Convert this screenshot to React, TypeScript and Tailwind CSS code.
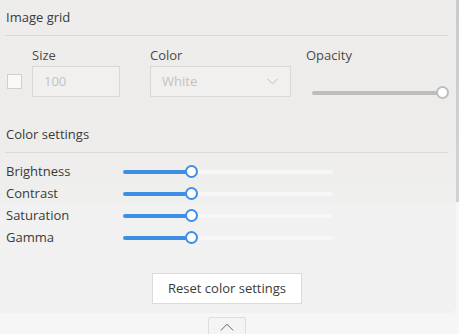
import React from "react";

const font = { fontFamily: '"Open Sans", "Noto Sans", sans-serif' };

function ColorSlider({ label }: { label: string }) {
  return (
    <div className="flex h-[22px] items-center">
      <div className="w-[123px] pl-[6px] text-[13px] leading-[18px] text-[#3a3a3a]">{label}</div>
      <div className="relative h-[13px] w-[210px]">
        <div className="absolute left-0 top-[5px] h-[4px] w-[210px] rounded-full bg-[#f7f7f7]" />
        <div className="absolute left-0 top-[5px] h-[4px] w-[64px] rounded-full bg-[#3d8fe6]" />
        <div className="absolute left-[62px] top-0 h-[13px] w-[13px] rounded-full border-2 border-[#3d8fe6] bg-white" />
      </div>
    </div>
  );
}

export default function App() {
  return (
    <div
      style={font}
      className="flex h-[334px] w-[459px] flex-col overflow-hidden bg-[linear-gradient(to_bottom,#cbcbcb_0px,#d2d2d2_202px,#f6f6f6_202px)]"
    >
      <div className="flex h-[313px] w-[456px] shrink-0 flex-col rounded-br-[6px] bg-[linear-gradient(to_bottom,#efedeb_0px,#eeecea_120px,#efefee_201px,#f1f1f1_202px)]">
        <div className="h-[35px] pl-[6px] pt-[8px] text-[13px] leading-[18px] text-[#3a3a3a]">Image grid</div>
        <div className="ml-[5px] h-px w-[443px] bg-[#d9d9d9]" />
        <div className="mt-[10px] flex h-[51px]">
          <div className="ml-[7px] flex w-[15px] flex-col">
            <div className="h-[20px]" />
            <div className="flex h-[31px] items-center">
              <div className="h-[15px] w-[15px] border border-[#cfcfcf] bg-[#fbf9f8]" />
            </div>
          </div>
          <div className="ml-[10px] flex w-[88px] flex-col">
            <div className="h-[20px] text-[13px] leading-[18px] text-[#4a4a4a]">Size</div>
            <div className="flex h-[31px] items-center border border-[#d8d8d8] bg-[#f1f0ef] pl-[11px] text-[13px] text-[#c2c2c2]">
              100
            </div>
          </div>
          <div className="ml-[30px] flex w-[141px] flex-col">
            <div className="h-[20px] text-[13px] leading-[18px] text-[#4a4a4a]">Color</div>
            <div className="flex h-[31px] items-center justify-between border border-[#d8d8d8] bg-[#f1f0ef] pl-[11px] pr-[12px] text-[13px] text-[#c2c2c2]">
              <span>White</span>
              <svg width="11" height="7" viewBox="0 0 11 7" fill="none">
                <path d="M0.5 0.8 L5.5 5.8 L10.5 0.8" stroke="#bdbdbd" strokeWidth="1" />
              </svg>
            </div>
          </div>
          <div className="ml-[15px] flex h-[51px] w-[142px] flex-col">
            <div className="h-[20px] text-[13px] leading-[18px] text-[#4a4a4a]">Opacity</div>
            <div className="relative ml-[6px] mt-[22px] h-[13px] w-[137px] shrink-0">
              <div className="absolute left-0 top-[4.5px] h-[4px] w-[130px] rounded-full bg-[#bdbdbd]" />
              <div className="absolute left-[124px] top-0 h-[13px] w-[13px] rounded-full border-2 border-[#bdbdbd] bg-white" />
            </div>
          </div>
        </div>
        <div className="mt-[28px] pl-[6px] text-[13px] leading-[18px] text-[#3a3a3a]">Color settings</div>
        <div className="ml-[5px] mt-[9px] h-px w-[443px] bg-[#d9d9d9]" />
        <div className="mt-[7px] flex flex-col">
          <ColorSlider label="Brightness" />
          <ColorSlider label="Contrast" />
          <ColorSlider label="Saturation" />
          <ColorSlider label="Gamma" />
        </div>
        <div className="mt-[25px] flex pl-[152px]">
          <div className="flex h-[31px] w-[150px] items-center justify-center border border-[#dadada] bg-white text-[13px] text-[#3a3a3a]">
            Reset color settings
          </div>
        </div>
      </div>
      <div className="mt-[4px] flex justify-center pr-[5px]">
        <div className="flex h-[20px] w-[38px] items-start justify-center rounded-t-[3px] border border-b-0 border-[#dedede] bg-[#f4f4f4] pt-[5px]">
          <svg width="14" height="8" viewBox="0 0 14 8" fill="none">
            <path d="M0.8 7.5 L7 1.2 L13.2 7.5" stroke="#666" strokeWidth="1" />
          </svg>
        </div>
      </div>
    </div>
  );
}
